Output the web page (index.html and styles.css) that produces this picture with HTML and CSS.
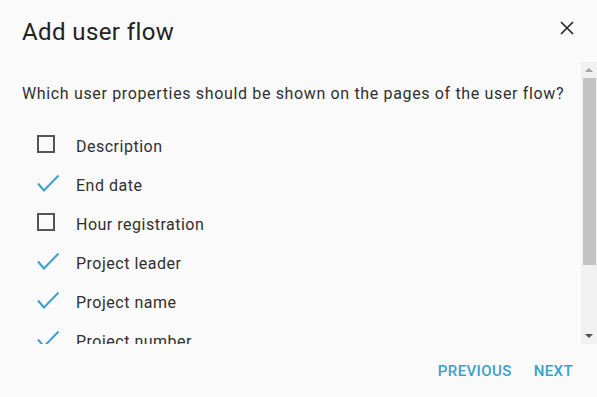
FILE: index.html
```html
<!DOCTYPE html>
<html>
<head>
<meta charset="utf-8">
<link rel="stylesheet" href="styles.css">
</head>
<body>
<div class="dialog">
  <div class="header">
    <h1 class="title">Add user flow</h1>
    <svg class="close" width="14" height="14" viewBox="0 0 14 14"><path d="M1 1 L13 13 M13 1 L1 13" stroke="#222" stroke-width="1.6" fill="none"/></svg>
  </div>
  <div class="scroll">
    <div class="content">
      <p class="question">Which user properties should be shown on the pages of the user flow?</p>
      <ul class="list">
        <li class="row"><svg class="icon" width="24" height="24" viewBox="0 0 24 24"><rect x="2" y="4" width="16" height="16" fill="none" stroke="#555" stroke-width="2"/></svg><span>Description</span></li>
        <li class="row"><svg class="icon" width="24" height="24" viewBox="0 0 24 24"><path d="M2 12.5 L8 19.5 L22.5 4.5" fill="none" stroke="#3ea0cd" stroke-width="2"/></svg><span>End date</span></li>
        <li class="row"><svg class="icon" width="24" height="24" viewBox="0 0 24 24"><rect x="2" y="4" width="16" height="16" fill="none" stroke="#555" stroke-width="2"/></svg><span>Hour registration</span></li>
        <li class="row"><svg class="icon" width="24" height="24" viewBox="0 0 24 24"><path d="M2 12.5 L8 19.5 L22.5 4.5" fill="none" stroke="#3ea0cd" stroke-width="2"/></svg><span>Project leader</span></li>
        <li class="row"><svg class="icon" width="24" height="24" viewBox="0 0 24 24"><path d="M2 12.5 L8 19.5 L22.5 4.5" fill="none" stroke="#3ea0cd" stroke-width="2"/></svg><span>Project name</span></li>
        <li class="row"><svg class="icon" width="24" height="24" viewBox="0 0 24 24"><path d="M2 12.5 L8 19.5 L22.5 4.5" fill="none" stroke="#3ea0cd" stroke-width="2"/></svg><span>Project number</span></li>
      </ul>
    </div>
    <div class="scrollbar">
      <div class="arrow up"></div>
      <div class="track"><div class="thumb"></div></div>
      <div class="arrow down"></div>
    </div>
  </div>
  <div class="footer">
    <span class="btn">PREVIOUS</span>
    <span class="btn">NEXT</span>
  </div>
</div>
</body>
</html>
```
FILE: styles.css
```css
html, body {
  margin: 0;
  padding: 0;
  background: #fafafa;
}
body {
  font-family: Roboto, "Liberation Sans", sans-serif;
  color: #303030;
}
.dialog {
  width: 597px;
  height: 397px;
  display: flex;
  flex-direction: column;
  overflow: hidden;
}
.header {
  height: 62px;
  box-sizing: border-box;
  padding: 18px 23px 0 22px;
  display: flex;
  justify-content: space-between;
  align-items: flex-start;
}
.title {
  margin: 0;
  font-size: 24px;
  font-weight: 400;
  line-height: 28px;
  letter-spacing: 0.4px;
  color: #222;
}
.close {
  margin-top: 3px;
}
.scroll {
  height: 282px;
  display: flex;
}
.content {
  flex: 1;
  overflow: hidden;
  padding-left: 22px;
}
.question {
  margin: 20px 0 0 0;
  font-size: 16px;
  line-height: 24px;
  letter-spacing: 0.65px;
  white-space: nowrap;
}
.list {
  list-style: none;
  margin: 21px 0 0 0;
  padding: 0 0 0 14px;
}
.row {
  height: 39px;
  display: flex;
  align-items: center;
  font-size: 16px;
  letter-spacing: 0.5px;
}
.icon {
  margin-bottom: 5px;
  margin-right: 16px;
  flex: none;
}
.scrollbar {
  width: 16px;
  background: #f1f1f1;
  display: flex;
  flex-direction: column;
}
.arrow {
  height: 16px;
  display: flex;
  align-items: center;
  justify-content: center;
}
.arrow::before {
  content: "";
  width: 0;
  height: 0;
  border-left: 4px solid transparent;
  border-right: 4px solid transparent;
}
.up::before {
  border-bottom: 4px solid #a3a3a3;
}
.down::before {
  border-top: 4px solid #505050;
}
.track {
  flex: 1;
}
.thumb {
  height: 187px;
  margin: 0 1px 0 2px;
  background: #c3c3c3;
}
.footer {
  flex: 1;
  display: flex;
  justify-content: flex-end;
  align-items: flex-start;
  padding: 17px 24px 0 0;
  gap: 22px;
}
.btn {
  font-size: 15px;
  font-weight: 500;
  line-height: 20px;
  letter-spacing: 0.4px;
  color: #3a9fcb;
}
```
